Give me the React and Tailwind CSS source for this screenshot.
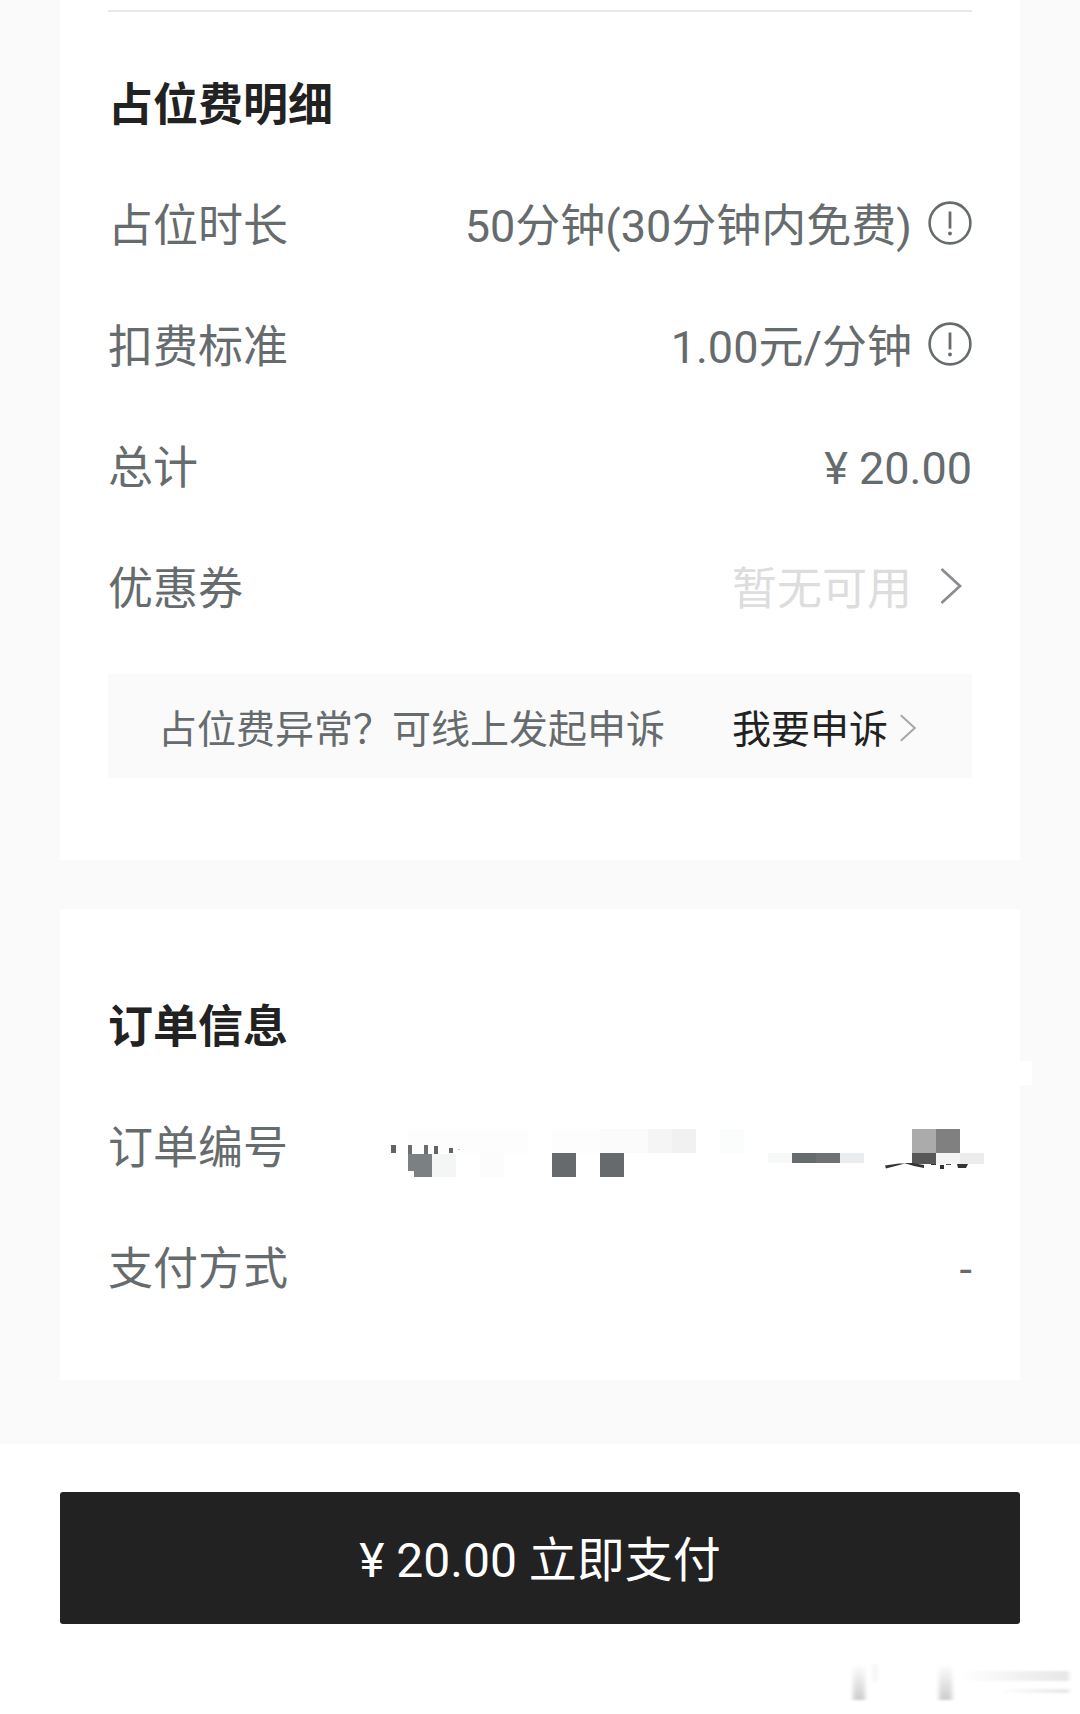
function InfoIcon() {
  return (
    <svg viewBox="0 0 44 44" className="size-11" fill="none" aria-hidden="true">
      <circle cx="22" cy="22" r="20.4" stroke="#666b6d" strokeWidth="2.6" />
      <path d="M22 10.5v17" stroke="#666b6d" strokeWidth="2.8" />
      <circle cx="22" cy="32.5" r="1.9" fill="#666b6d" />
    </svg>
  );
}

function Chevron({ className }) {
  return (
    <svg viewBox="0 0 20 34" className={className} fill="none" aria-hidden="true">
      <path d="M1 1l17.5 16L1 33" stroke="currentColor" strokeWidth="2.6" />
    </svg>
  );
}

// x, y, width, height, colour of each block that hides the order number
const mosaicBlocks = [
  [20, 12, 120, 24, "#fdfdfd"],
  [164, 12, 48, 24, "#fdfdfd"],
  [212, 12, 48, 24, "#fbfbfc"],
  [260, 12, 24, 24, "#f5f5f5"],
  [284, 12, 24, 24, "#f1f1f1"],
  [332, 12, 24, 24, "#fbfcfc"],
  [3, 28, 5, 8, "#5f6466"],
  [20, 28, 4, 9, "#6a6f71"],
  [36, 28, 4, 9, "#6a6f71"],
  [46, 29, 4, 8, "#5f6466"],
  [61, 31, 4, 5, "#5f6466"],
  [70, 32, 2, 1, "#c8caca"],
  [20, 37, 24, 23, "#7b8083"],
  [20, 54, 6, 6, "#ffffff"],
  [44, 37, 24, 23, "#f4f5f5"],
  [92, 36, 24, 24, "#fcfcfc"],
  [164, 36, 24, 24, "#666a6d"],
  [212, 36, 24, 24, "#666a6d"],
  [380, 36, 24, 10, "#f7f8f8"],
  [404, 36, 24, 10, "#666b6d"],
  [428, 36, 24, 10, "#6e7275"],
  [452, 36, 24, 10, "#e9edf0"],
  [524, 12, 24, 24, "#ababab"],
  [548, 12, 24, 24, "#808080"],
  [524, 36, 24, 11, "#575757"],
  [548, 36, 24, 11, "#f4f4f4"],
  [572, 36, 24, 11, "#ececec"],
  [543, 47, 5, 1, "#333333"],
  [552, 48, 4, 4, "#333333"],
  [558, 47, 5, 1, "#555555"],
];

function HiddenOrderNumber() {
  return (
    <svg
      viewBox="0 0 596 64"
      className="-mr-3 h-16 w-[596px] shrink-0"
      shapeRendering="crispEdges"
      role="img"
      aria-label="订单编号已隐藏"
    >
      {mosaicBlocks.map(([x, y, width, height, fill]) => (
        <rect key={`${x}-${y}`} x={x} y={y} width={width} height={height} fill={fill} />
      ))}
      <g fill="#333333" shapeRendering="auto">
        <path d="M497 48.500l14-2h6l-19 5z" />
        <path d="M516 46h8l12 2v3l-10-2z" />
        <path d="M569 47h11l-2 4h-8z" />
      </g>
    </svg>
  );
}

function Watermark() {
  return (
    <svg viewBox="0 0 240 48" className="ml-auto h-12 w-60" aria-hidden="true">
      <defs>
        <linearGradient id="fade-down" x1="0" y1="0" x2="0" y2="1">
          <stop offset="0" stopColor="#ffffff" />
          <stop offset="1" stopColor="#cccccc" />
        </linearGradient>
        <linearGradient id="fade-right" x1="0" y1="0" x2="1" y2="0">
          <stop offset="0" stopColor="#ffffff" />
          <stop offset="1" stopColor="#e6e6e6" />
        </linearGradient>
        <filter id="soft" x="-50%" y="-50%" width="200%" height="200%">
          <feGaussianBlur stdDeviation="2 1" />
        </filter>
      </defs>
      <g filter="url(#soft)">
        <rect x="13" y="8" width="12" height="36" fill="url(#fade-down)" />
        <rect x="99" y="8" width="13" height="36" fill="url(#fade-down)" />
        <rect x="34" y="8" width="2" height="18" fill="#e8e8e8" />
        <rect x="120" y="15" width="109" height="10" fill="url(#fade-right)" />
        <rect x="160" y="33" width="69" height="4" fill="url(#fade-right)" />
      </g>
    </svg>
  );
}

function Row({ label, children }) {
  return (
    <div className="flex h-[121px] items-center justify-between">
      <dt>{label}</dt>
      <dd className="flex items-center">{children}</dd>
    </div>
  );
}

function SectionTitle({ children }) {
  return (
    <h2 className="flex h-[121px] items-center font-bold text-[#222222]">{children}</h2>
  );
}

function App() {
  return (
    <div className="min-h-screen bg-white font-[Roboto,'Noto_Sans_CJK_SC',sans-serif] text-[45px] leading-[64px] text-[#666b6d]">
      <main className="flex flex-col gap-[49px] bg-[#fafafa] px-[60px] pb-16">
        <section className="bg-white px-12 pt-2.5 pb-[82px]">
          <hr className="mb-[33px] border-t-2 border-[#e8e8e8]" />
          <SectionTitle>占位费明细</SectionTitle>
          <dl>
            <Row label="占位时长">
              50分钟(30分钟内免费)
              <button type="button" aria-label="占位时长说明" className="mb-2 ml-4">
                <InfoIcon />
              </button>
            </Row>
            <Row label="扣费标准">
              1.00元/分钟
              <button type="button" aria-label="扣费标准说明" className="mb-2 ml-4">
                <InfoIcon />
              </button>
            </Row>
            <Row label="总计">¥ 20.00</Row>
            <Row label="优惠券">
              <button type="button" className="flex items-center pr-2.5 text-[#dddddd]">
                暂无可用
                <Chevron className="mb-2 ml-7 h-9 w-[22px] text-[#8a8c90]" />
              </button>
            </Row>
          </dl>
          <div className="mt-6 flex h-[104px] items-center justify-between bg-[#fafafa] pt-2 pr-14 pl-[50px] text-[39px]">
            <p>占位费异常？可线上发起申诉</p>
            <a href="#appeal" className="flex items-center text-[#222222]">
              我要申诉
              <Chevron className="mb-1 ml-3 h-7 w-4 text-[#a5a7aa]" />
            </a>
          </div>
        </section>

        <section className="relative bg-white px-12 pt-[58px] pb-[50px]">
          <span className="absolute top-[152px] -right-3 h-6 w-3 bg-white" />
          <SectionTitle>订单信息</SectionTitle>
          <dl>
            <Row label="订单编号">
              <HiddenOrderNumber />
            </Row>
            <Row label="支付方式">-</Row>
          </dl>
        </section>
      </main>

      <footer className="px-[60px] pt-12">
        <button
          type="button"
          className="h-[132px] w-full rounded-[3px] bg-[#222222] pt-1.5 text-[48px] text-white"
        >
          ¥ 20.00 立即支付
        </button>
        <div className="-mr-[60px] pt-8">
          <Watermark />
        </div>
      </footer>
    </div>
  );
}

export default App;
